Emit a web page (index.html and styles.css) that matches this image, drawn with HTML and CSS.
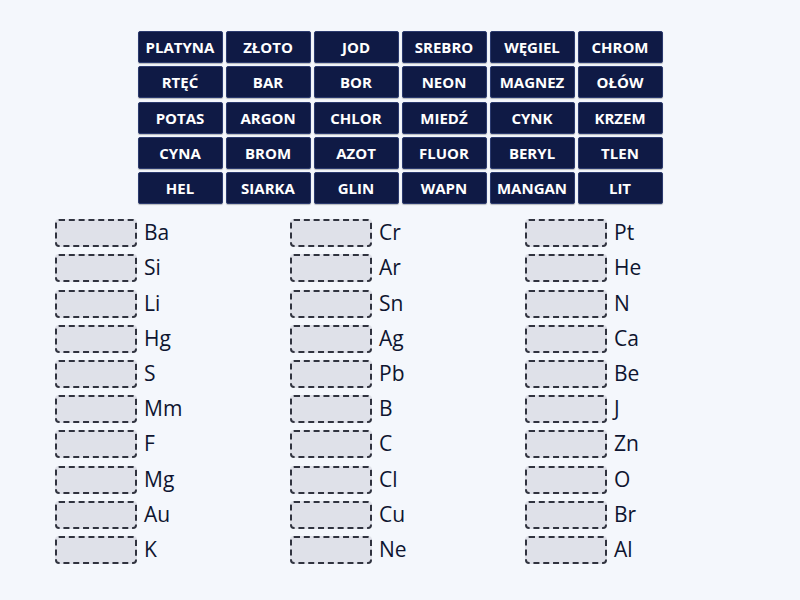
FILE: index.html
```html
<!DOCTYPE html>
<html>
	<head>
		<meta http-equiv="Content-Type" content="text/html; charset=UTF-8">
		<title>Pierwiastki - dopasuj nazwy</title>
		<link rel="stylesheet" href="styles.css">
	</head>
	<body>
		<!-- nazwy do przeciągnięcia -->
		<div class="tiles">
			<div class="tile">PLATYNA</div>
			<div class="tile">ZŁOTO</div>
			<div class="tile">JOD</div>
			<div class="tile">SREBRO</div>
			<div class="tile">WĘGIEL</div>
			<div class="tile">CHROM</div>
			<div class="tile">RTĘĆ</div>
			<div class="tile">BAR</div>
			<div class="tile">BOR</div>
			<div class="tile">NEON</div>
			<div class="tile">MAGNEZ</div>
			<div class="tile">OŁÓW</div>
			<div class="tile">POTAS</div>
			<div class="tile">ARGON</div>
			<div class="tile">CHLOR</div>
			<div class="tile">MIEDŹ</div>
			<div class="tile">CYNK</div>
			<div class="tile">KRZEM</div>
			<div class="tile">CYNA</div>
			<div class="tile">BROM</div>
			<div class="tile">AZOT</div>
			<div class="tile">FLUOR</div>
			<div class="tile">BERYL</div>
			<div class="tile">TLEN</div>
			<div class="tile">HEL</div>
			<div class="tile">SIARKA</div>
			<div class="tile">GLIN</div>
			<div class="tile">WAPN</div>
			<div class="tile">MANGAN</div>
			<div class="tile">LIT</div>
		</div>

		<!-- symbole z pustymi polami -->
		<div class="slots">
			<div class="col">
				<div class="row"><span class="box"></span><span class="sym">Ba</span></div>
				<div class="row"><span class="box"></span><span class="sym">Si</span></div>
				<div class="row"><span class="box"></span><span class="sym">Li</span></div>
				<div class="row"><span class="box"></span><span class="sym">Hg</span></div>
				<div class="row"><span class="box"></span><span class="sym">S</span></div>
				<div class="row"><span class="box"></span><span class="sym">Mm</span></div>
				<div class="row"><span class="box"></span><span class="sym">F</span></div>
				<div class="row"><span class="box"></span><span class="sym">Mg</span></div>
				<div class="row"><span class="box"></span><span class="sym">Au</span></div>
				<div class="row"><span class="box"></span><span class="sym">K</span></div>
			</div>
			<div class="col">
				<div class="row"><span class="box"></span><span class="sym">Cr</span></div>
				<div class="row"><span class="box"></span><span class="sym">Ar</span></div>
				<div class="row"><span class="box"></span><span class="sym">Sn</span></div>
				<div class="row"><span class="box"></span><span class="sym">Ag</span></div>
				<div class="row"><span class="box"></span><span class="sym">Pb</span></div>
				<div class="row"><span class="box"></span><span class="sym">B</span></div>
				<div class="row"><span class="box"></span><span class="sym">C</span></div>
				<div class="row"><span class="box"></span><span class="sym">Cl</span></div>
				<div class="row"><span class="box"></span><span class="sym">Cu</span></div>
				<div class="row"><span class="box"></span><span class="sym">Ne</span></div>
			</div>
			<div class="col">
				<div class="row"><span class="box"></span><span class="sym">Pt</span></div>
				<div class="row"><span class="box"></span><span class="sym">He</span></div>
				<div class="row"><span class="box"></span><span class="sym">N</span></div>
				<div class="row"><span class="box"></span><span class="sym">Ca</span></div>
				<div class="row"><span class="box"></span><span class="sym">Be</span></div>
				<div class="row"><span class="box"></span><span class="sym">J</span></div>
				<div class="row"><span class="box"></span><span class="sym">Zn</span></div>
				<div class="row"><span class="box"></span><span class="sym">O</span></div>
				<div class="row"><span class="box"></span><span class="sym">Br</span></div>
				<div class="row"><span class="box"></span><span class="sym">Al</span></div>
			</div>
		</div>
	</body>
</html>
```

FILE: styles.css
```css
body {
	margin : 0;
	background-color : #f4f7fc;
	font-family : "Open Sans", "Noto Sans", sans-serif;
	color : #0e1530;
	width : 800px;
	height : 600px;
	overflow : hidden;
}
.tiles {
	display : grid;
	grid-template-columns : repeat(6, 85px);
	grid-auto-rows : 32px;
	column-gap : 3px;
	row-gap : 3.3px;
	justify-content : center;
	padding-top : 31px;
}
.tile {
	background-color : #0f1a45;
	border : 1px solid #2b3a6e;
	border-radius : 2px;
	color : #ffffff;
	font-size : 15px;
	font-weight : bold;
	display : flex;
	align-items : center;
	justify-content : center;
	box-shadow : 0 1px 1px rgba(0, 0, 0, 0.25);
}
.slots {
	display : grid;
	grid-template-columns : repeat(3, 235px);
	padding-left : 55px;
	padding-top : 15px;
}
.row {
	display : flex;
	align-items : center;
	height : 28px;
	margin-bottom : 7.2px;
}
.box {
	width : 78px;
	height : 24px;
	background-color : #dfe1e9;
	border : 2px dashed #30333f;
	border-radius : 4px;
}
.sym {
	font-size : 21px;
	margin-left : 7px;
	line-height : 28px;
	position : relative;
	top : -1px;
}
```
